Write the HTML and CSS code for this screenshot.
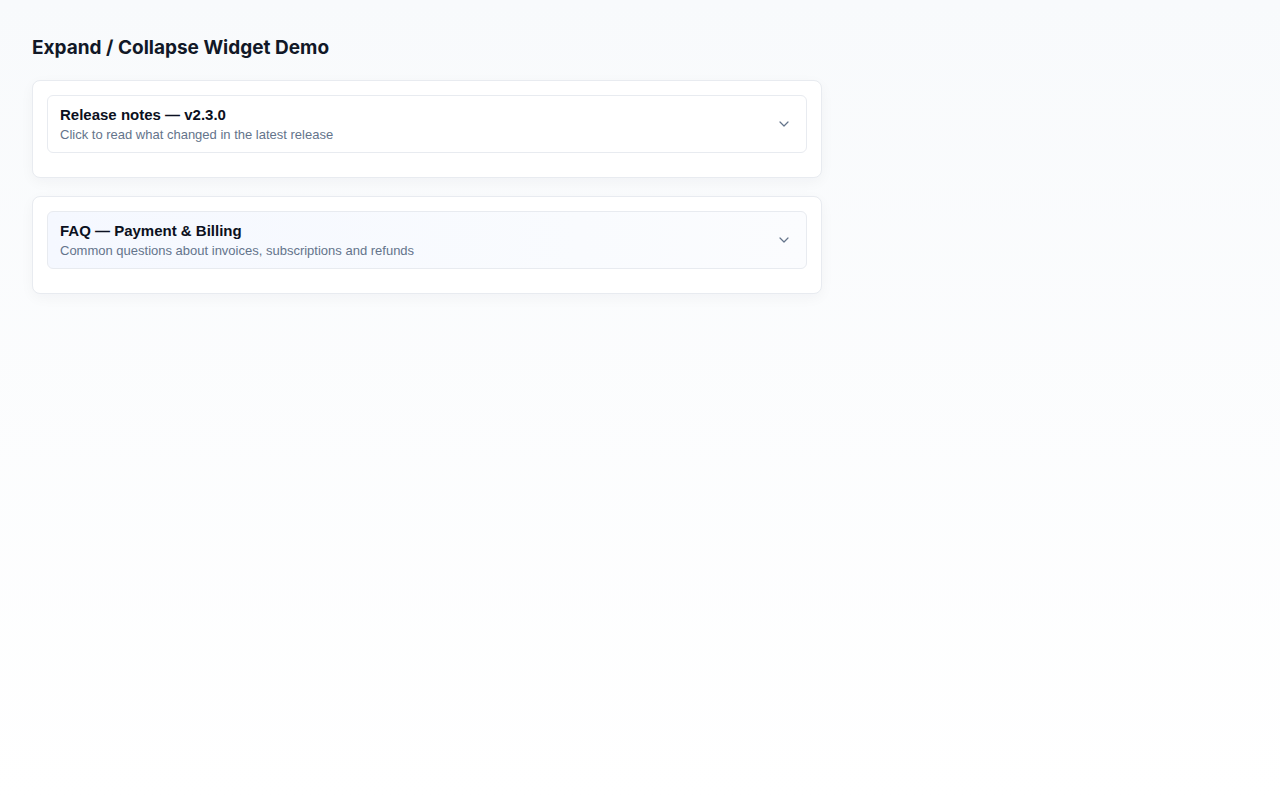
FILE: index.html
```html
<!DOCTYPE html>
<html lang="en">
<head>
<meta charset="UTF-8">
<meta name="viewport" content="width=device-width, initial-scale=1.0">
<title>Expand / Collapse Widget Demo</title>
<link rel="stylesheet" href="styles.css">
</head>
<body>

<div class="page">
  <h1>Expand / Collapse Widget Demo</h1>

  <div class="widget">
    <div class="widget-head">
      <div class="head-text">
        <div class="head-title">Release notes — v2.3.0</div>
        <div class="head-sub">Click to read what changed in the latest release</div>
      </div>
      <svg class="chevron" width="16" height="16" viewBox="0 0 24 24" fill="none" stroke="currentColor" stroke-width="1.8" stroke-linecap="round" stroke-linejoin="round"><path d="M6 9l6 6 6-6"/></svg>
    </div>
  </div>

  <div class="widget">
    <div class="widget-head hover">
      <div class="head-text">
        <div class="head-title">FAQ — Payment &amp; Billing</div>
        <div class="head-sub">Common questions about invoices, subscriptions and refunds</div>
      </div>
      <svg class="chevron" width="16" height="16" viewBox="0 0 24 24" fill="none" stroke="currentColor" stroke-width="1.8" stroke-linecap="round" stroke-linejoin="round"><path d="M6 9l6 6 6-6"/></svg>
    </div>
  </div>
</div>

</body>
</html>
```

FILE: styles.css
```css
html {
  min-height: 100%;
  background: linear-gradient(#f8fafc, #ffffff);
}
body {
  margin: 0;
  font-family: "Liberation Sans", Arial, sans-serif;
  color: #0f172a;
}
.page {
  width: 790px;
  padding: 32px;
}
h1 {
  font-family: Inter, "Liberation Sans", sans-serif;
  font-size: 19px;
  font-weight: 700;
  color: #111827;
  margin: 3px 0 20px;
  line-height: 25px;
}
.widget {
  background: #fff;
  border: 1px solid #e8ebf0;
  border-radius: 8px;
  padding: 14px 14px 24px;
  margin-bottom: 18px;
  box-shadow: 0 4px 14px rgba(15, 23, 42, 0.04);
}
.widget-head {
  display: flex;
  align-items: center;
  justify-content: space-between;
  border: 1px solid #e8ebf0;
  border-radius: 6px;
  padding: 9px 12px;
  cursor: pointer;
}
.widget-head.hover {
  background: linear-gradient(90deg, #f5f8ff, #f9fbfe 70%, #fbfcfe);
}
.head-title {
  font-size: 15px;
  font-weight: 700;
  line-height: 19px;
  color: #0b1020;
}
.head-sub {
  font-size: 13px;
  line-height: 16px;
  margin-top: 3px;
  color: #64748b;
}
.chevron {
  color: #64748b;
  margin-right: 2px;
}
```
